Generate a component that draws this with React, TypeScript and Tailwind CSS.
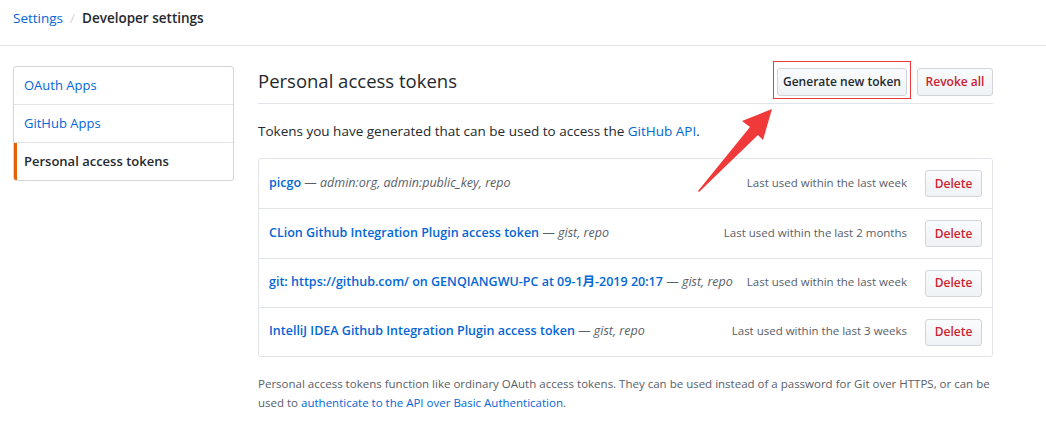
import React from "react";

const tokens = [
  { name: "picgo", scopes: "admin:org, admin:public_key, repo", used: "Last used within the last week" },
  { name: "CLion Github Integration Plugin access token", scopes: "gist, repo", used: "Last used within the last 2 months" },
  { name: "git: https://github.com/ on GENQIANGWU-PC at 09-1月-2019 20:17", scopes: "gist, repo", used: "Last used within the last week" },
  { name: "IntelliJ IDEA Github Integration Plugin access token", scopes: "gist, repo", used: "Last used within the last 3 weeks" },
];

const rowHeights = ["h-[50px]", "h-[50px]", "h-[49px]", "h-[48px]"];

const btn =
  "rounded-[3px] border border-[#d1d5da] bg-gradient-to-b from-[#fafbfc] to-[#eff3f6] font-semibold leading-none";

const App = () => {
  return (
    <div className="min-h-[429px] w-[1046px] bg-white text-[#24292e] font-['Open_Sans','Noto_Sans_CJK_SC',sans-serif]">
      {/* breadcrumb */}
      <div className="flex h-[46px] items-center border-b border-[#e1e4e8] pl-[13px] pb-[8px] text-[13.5px]">
        <a className="text-[#0366d6]">Settings</a>
        <span className="mx-[7px] text-[#d1d5da]">/</span>
        <span className="font-semibold">Developer settings</span>
      </div>

      <div className="flex gap-[24px] pl-[13px] pt-[20px]">
        {/* sidebar */}
        <nav className="w-[221px] self-start overflow-hidden rounded-[3px] border border-[#d1d5da] text-[13px]">
          <a className="flex h-[38px] items-center border-b border-[#e1e4e8] px-[10px] text-[#0366d6]">OAuth Apps</a>
          <a className="flex h-[38px] items-center border-b border-[#e1e4e8] px-[10px] text-[#0366d6]">GitHub Apps</a>
          <a className="flex h-[37px] items-center border-l-[3px] border-[#e36209] pl-[7px] pr-[10px] font-semibold">
            Personal access tokens
          </a>
        </nav>

        {/* main */}
        <div className="relative w-[735px]">
          <div className="flex h-[38px] items-center justify-between border-b border-[#e1e4e8] pb-[6px]">
            <h2 className="text-[18.5px] font-normal leading-none">Personal access tokens</h2>
            <div className="flex items-center gap-[10px]">
              <div className="relative">
                <button className={`${btn} h-[28px] w-[130px] text-[12px] text-[#24292e]`}>Generate new token</button>
                <div className="pointer-events-none absolute -top-[7px] -left-[4px] -right-[4px] -bottom-[3px] border border-[#f03a3a]" />
              </div>
              <button className={`${btn} h-[28px] w-[76px] text-[12px] text-[#cb2431]`}>Revoke all</button>
            </div>
          </div>

          <p className="mt-[17px] text-[13.5px] leading-[20px]">
            Tokens you have generated that can be used to access the <a className="text-[#0366d6]">GitHub API</a>.
          </p>

          <div className="mt-[17px] rounded-[3px] border border-[#e1e4e8]">
            {tokens.map((t, i) => (
              <div
                key={i}
                className={`flex items-center justify-between gap-[10px] px-[10px] ${rowHeights[i]} ${i < tokens.length - 1 ? "border-b border-[#e1e4e8]" : ""}`}
              >
                <div className="whitespace-nowrap text-[12.5px] leading-[18px] pb-[2px]">
                  <a className="font-semibold text-[#0366d6]">{t.name}</a>
                  <span className="text-[#586069]"> — <em>{t.scopes}</em></span>
                </div>
                <div className="flex items-center gap-[18px]">
                  <span className="text-[11.5px] leading-[16px] pb-[2px] text-[#586069] whitespace-nowrap">{t.used}</span>
                  <button className={`${btn} h-[27px] w-[57px] shrink-0 text-[12px] text-[#cb2431]`}>Delete</button>
                </div>
              </div>
            ))}
          </div>

          <p className="mt-[17px] text-[11.5px] leading-[19px] text-[#586069]">
            Personal access tokens function like ordinary OAuth access tokens. They can be used instead of a password for Git over HTTPS, or can be used to{" "}
            <a className="text-[#0366d6]">authenticate to the API over Basic Authentication</a>.
          </p>

          {/* red annotation arrow */}
          <svg className="pointer-events-none absolute left-[430px] top-[36px]" width="90" height="90" viewBox="0 0 90 90">
            <polygon points="10,89 11,90 70,33 75,38 84,7 54,19 62,25" fill="#f03a3a" />
          </svg>
        </div>
      </div>
    </div>
  );
};

export default App;
